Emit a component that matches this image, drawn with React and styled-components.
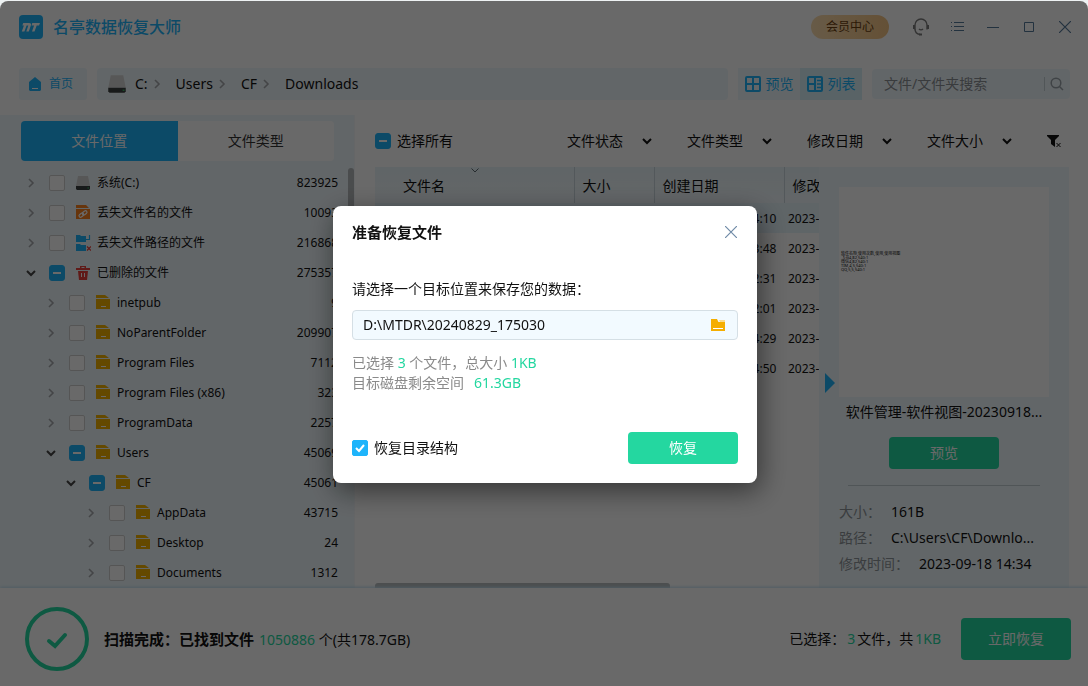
import React, { useEffect, useRef } from "react";
import styled, { createGlobalStyle } from "styled-components";

const blue = "#1eb4fb";
const green = "#24d7a0";
const pale = "#eff8fc";

const GlobalStyle = createGlobalStyle`
  *, *::before, *::after { box-sizing: border-box; }
  body {
    margin: 0;
    background: #eef2f3;
    color: #111;
    font: 14px/20px "Noto Sans", "Noto Sans CJK SC", sans-serif;
  }
  button, input, select { font: inherit; color: inherit; }
  button { padding: 0; border: 0; background: none; cursor: pointer; }
  svg { display: block; flex: none; }
`;

const Window = styled.div`
  display: flex;
  flex-direction: column;
  min-height: calc(100vh - 1px);
  margin-top: 1px;
  background: #fff;
  border-radius: 8px 8px 0 0;
`;

/* ---------- title bar ---------- */
const TitleBar = styled.header`
  display: flex;
  align-items: center;
  height: 52px;
  padding: 0 5px 0 19px;
`;
const Title = styled.h1`
  flex: 1;
  margin: 0 0 0 10px;
  color: ${blue};
  font-size: 16px;
  line-height: 24px;
  font-weight: 500;
`;
const MemberButton = styled.button`
  width: 78px;
  height: 24px;
  margin-right: 14px;
  border-radius: 12px;
  background: linear-gradient(90deg, #fbdcae, #f3c383);
  color: #6b3f10;
  font-size: 12px;
`;
const WindowButton = styled.button`
  display: grid;
  place-items: center;
  width: 36px;
  height: 36px;
  color: #56799a;
`;

/* ---------- toolbar ---------- */
const Toolbar = styled.div`
  display: flex;
  align-items: center;
  gap: 10px;
  height: 32px;
  margin: 15px 18px 15px 19px;
`;
const HomeLink = styled.a`
  display: flex;
  align-items: center;
  gap: 8px;
  width: 68px;
  height: 32px;
  padding-left: 10px;
  border-radius: 3px;
  background: ${pale};
  color: ${blue};
  font-size: 12px;
  text-decoration: none;
`;
const Breadcrumb = styled.nav`
  display: flex;
  flex: 1;
  align-items: center;
  height: 32px;
  padding-left: 10px;
  border-radius: 4px;
  background: ${pale};
`;
const Crumb = styled.a`
  display: flex;
  align-items: center;
  gap: 4px;
  margin-right: 14px;
  color: inherit;
  text-decoration: none;
`;
const DriveMark = styled.span`
  margin-right: 8px;
`;
const ViewSwitch = styled.div`
  display: flex;
  height: 32px;
`;
const ViewButton = styled.button`
  display: flex;
  align-items: center;
  justify-content: center;
  gap: 5px;
  width: 62px;
  background: ${(p) => (p.$active ? "#d8f1f7" : pale)};
  color: ${blue};
`;
const SearchBox = styled.label`
  display: flex;
  align-items: center;
  width: 198px;
  height: 30px;
  padding: 0 6px 0 12px;
  border-radius: 4px;
  background: ${pale};
`;
const SearchInput = styled.input`
  flex: 1;
  min-width: 0;
  padding: 0;
  border: 0;
  background: none;
  outline: none;
  &::placeholder { color: #8a8f94; opacity: 1; }
`;
const SearchMark = styled.span`
  padding-left: 5px;
  border-left: 1px solid #c6d0d6;
`;

/* ---------- layout ---------- */
const Main = styled.main`
  display: flex;
  flex: 1;
`;
const Sidebar = styled.aside`
  display: flex;
  flex: none;
  flex-direction: column;
  width: 355px;
  padding-top: 6px;
  border-right: 1px solid #f4f8fb;
  background: ${pale};
`;
const Content = styled.section`
  display: flex;
  flex: 1;
  flex-direction: column;
  min-width: 0;
  padding: 0 19px 0 20px;
`;

/* ---------- checkbox ---------- */
const CheckShell = styled.span`
  display: grid;
  flex: none;
  width: 16px;
  height: 16px;
  > * { grid-area: 1 / 1; place-self: center; }
  > svg { pointer-events: none; }
`;
const CheckInput = styled.input`
  appearance: none;
  width: 16px;
  height: 16px;
  margin: 0;
  border: 1px solid #cfcfcf;
  border-radius: 2px;
  background: #fff;
  &:checked, &:indeterminate { border-color: ${blue}; background: ${blue}; }
  &:indeterminate { border-radius: 3px; }
`;

function Checkbox({ state, ...rest }) {
  const ref = useRef(null);
  useEffect(() => {
    ref.current.indeterminate = state === "mixed";
  }, [state]);
  return (
    <CheckShell>
      <CheckInput ref={ref} type="checkbox" defaultChecked={state === "checked"} {...rest} />
      {state === "mixed" && (
        <svg width="16" height="16"><path d="M4 8h8" stroke="#fff" strokeWidth="2" /></svg>
      )}
      {state === "checked" && (
        <svg width="16" height="16"><path d="M4 8l3 3 5-6" fill="none" stroke="#fff" strokeWidth="2" /></svg>
      )}
    </CheckShell>
  );
}

/* ---------- sidebar tree ---------- */
const Tabs = styled.div`
  display: flex;
  height: 40px;
  margin: 0 20px 0 21px;
  border-radius: 4px;
  overflow: hidden;
`;
const Tab = styled.button`
  flex: 1;
  background: ${(p) => (p.$active ? blue : "#fff")};
  color: ${(p) => (p.$active ? "#fff" : "#333")};
`;
const TreeArea = styled.div`
  display: flex;
  flex: 1;
  padding-top: 7px;
`;
const Tree = styled.ul`
  flex: 1;
  margin: 0;
  padding: 0 10px 0 25px;
  list-style: none;
`;
const TreeRow = styled.li`
  display: flex;
  align-items: center;
  height: 30px;
  padding-left: ${(p) => p.$level * 20}px;
  font-size: 12px;
`;
const Expander = styled.button`
  display: grid;
  place-items: center;
  width: 12px;
  height: 16px;
  margin-right: 12px;
`;
const NodeLabel = styled.label`
  display: flex;
  flex: 1;
  align-items: center;
`;
const NodeIcon = styled.span`
  width: 16px;
  margin: 0 6px 0 10px;
`;
const ScrollThumb = styled.div`
  width: 6px;
  height: 150px;
  border-radius: 3px;
  background: #b4b8bb;
`;

/* ---------- filters ---------- */
const FilterBar = styled.div`
  display: flex;
  align-items: center;
  gap: 35px;
  height: 52px;
  padding-right: 8px;
`;
const SelectAll = styled.label`
  display: flex;
  align-items: center;
  gap: 6px;
  margin-right: auto;
`;
const FilterField = styled.span`
  display: grid;
  align-items: center;
  width: 85px;
  > * { grid-area: 1 / 1; }
  > svg { justify-self: end; pointer-events: none; }
`;
const FilterSelect = styled.select`
  appearance: none;
  width: 100%;
  padding: 0;
  border: 0;
  background: none;
`;

/* ---------- file table ---------- */
const Columns = styled.div`
  display: flex;
  flex: 1;
`;
const TablePane = styled.div`
  display: flex;
  flex: 1;
  flex-direction: column;
  justify-content: space-between;
  min-width: 0;
  overflow: hidden;
`;
const FileTable = styled.table`
  width: 100%;
  table-layout: fixed;
  border-collapse: collapse;
`;
const HeadCell = styled.th`
  width: ${(p) => p.$width || "auto"};
  height: 36px;
  padding: 2px 0 0 ${(p) => (p.$first ? 28 : 8)}px;
  border-left: ${(p) => (p.$first ? "0" : "1px solid #c9d6dd")};
  background: linear-gradient(#e9f5fa, #f1f8fc);
  font-weight: 400;
  text-align: left;
  white-space: nowrap;
  overflow: hidden;
`;
const HeadInner = styled.span`
  display: flex;
  justify-content: space-between;
  padding-right: 95px;
  > svg { margin-top: -10px; }
`;
const FileRow = styled.tr`
  background: ${(p) => (p.$selected ? "#e6f4fb" : "#fff")};
`;
const Cell = styled.td`
  height: 30px;
  padding: 2px 0 0 ${(p) => (p.$tight ? 4 : 9)}px;
  font-size: 12px;
  white-space: nowrap;
  overflow: hidden;
`;
const HorizontalThumb = styled.div`
  width: 295px;
  height: 5px;
  border-radius: 3px 3px 0 0;
  background: #b9bdbf;
`;

/* ---------- preview ---------- */
const PreviewPane = styled.aside`
  display: flex;
  flex: none;
  width: 250px;
  padding-right: 20px;
  background: ${pale};
`;
const CollapseHandle = styled.button`
  display: flex;
  align-items: center;
  width: 20px;
  padding: 10px 0 0 6px;
`;
const PreviewBody = styled.div`
  display: flex;
  flex: 1;
  flex-direction: column;
  align-items: center;
  min-width: 0;
  padding-top: 20px;
`;
const Thumbnail = styled.pre`
  width: 100%;
  height: 210px;
  margin: 0;
  padding: 65px 2px 0;
  background: #fff;
  font: 4px/4px "Noto Sans", "Noto Sans CJK SC", sans-serif;
`;
const FileName = styled.p`
  margin: 5px 0 15px;
  white-space: nowrap;
`;
const ActionButton = styled.button`
  width: 110px;
  height: ${(p) => (p.$large ? 42 : 32)}px;
  border-radius: 4px;
  background: ${green};
  color: #fff;
`;
const Divider = styled.hr`
  width: 192px;
  margin: 16px 0 13px;
  border: 0;
  border-top: 1px solid #c3ced4;
`;
const Details = styled.dl`
  width: 100%;
  margin: 0;
`;
const DetailRow = styled.div`
  display: flex;
  gap: 10px;
  line-height: 26px;
  white-space: nowrap;
  dt { color: #8d9499; }
  dd { margin: 0; }
`;

/* ---------- footer ---------- */
const Footer = styled.footer`
  position: relative;
  display: flex;
  align-items: center;
  height: 98px;
  padding: 4px 17px 0 25px;
  background: #fff;
  box-shadow: 0 -1px 3px #bfe0f2;
`;
const ScanResult = styled.p`
  flex: 1;
  margin: 0 0 0 15px;
`;
const Strong = styled.strong`
  margin-right: 5px;
  font-size: 15px;
`;
const Accent = styled.span`
  color: ${green};
`;
const Selection = styled.p`
  display: flex;
  gap: 2px;
  margin: 0 20px 0 0;
`;

/* ---------- dialog ---------- */
const Overlay = styled.div`
  position: fixed;
  inset: 1px 0 0 0;
  z-index: 2;
  display: grid;
  place-items: center;
  padding: 2px 0 0 2px;
  border-radius: 8px 8px 0 0;
  background: rgba(0, 0, 0, 0.59);
`;
const Dialog = styled.form`
  width: 424px;
  padding: 16px 19px 19px;
  border-radius: 8px;
  background: #fff;
  box-shadow: 3px 8px 28px rgba(0, 0, 0, 0.5);
`;
const DialogHead = styled.div`
  display: flex;
  align-items: center;
  justify-content: space-between;
  height: 20px;
`;
const DialogTitle = styled.h2`
  margin: 0;
  font-size: 15px;
  line-height: 20px;
`;
const CloseButton = styled.button`
  padding-right: 1px;
  color: #6f8aa6;
`;
const FieldLabel = styled.label`
  display: block;
  margin: 37px 0 11px;
`;
const PathField = styled.div`
  display: flex;
  align-items: center;
  height: 30px;
  padding: 0 12px 0 10px;
  border: 1px solid #d5dfe5;
  border-radius: 4px;
  background: #f2faff;
`;
const PathInput = styled.input`
  flex: 1;
  min-width: 0;
  padding: 0;
  border: 0;
  background: none;
  outline: none;
`;
const Summary = styled.p`
  margin: 13px 0 39px;
  color: #8a8a8a;
`;
const SpaceValue = styled(Accent)`
  margin-left: 10px;
`;
const DialogFoot = styled.div`
  display: flex;
  align-items: center;
  justify-content: space-between;
`;
const Option = styled.label`
  display: flex;
  align-items: center;
  gap: 6px;
`;

/* ---------- icons ---------- */
const Logo = () => (
  <svg width="24" height="24" viewBox="0 0 24 24">
    <rect width="24" height="24" rx="4" fill={blue} />
    <path
      d="M4.200 8H10q2.600 0 1.900 2.200L9.800 16.500H7.300l2-6H7.600l-2.200 6H2.800l2.100-6H3.400zM13.300 8H21l-1 2.500h-2.300L15.500 16.500H13l2.100-6h-2.600z"
      fill="#fff"
    />
  </svg>
);
const Chevron = ({ down, color = "#a5a9ac" }) => (
  <svg width="10" height="10" viewBox="0 0 10 10" fill="none" stroke={color} strokeWidth={down ? 2 : 1.6}>
    <path d={down ? "M1 3l4 4 4-4" : "M3 1l4 4-4 4"} />
  </svg>
);
const Drive = ({ width = 16 }) => (
  <svg width={width} height={width} viewBox="0 0 16 16">
    <path d="M3 1h10l2 10H1z" fill="#d4d4d4" />
    <path d="M1 11h14v3l-1 1H2l-1-1z" fill="#3b3f40" />
    <path d="M12.500 12.500h1.500v1h-1.500z" fill="#3fbf6a" />
  </svg>
);
const Folder = () => (
  <svg width="16" height="16" viewBox="0 0 16 16">
    <path d="M1 0h9l4 3H1z" fill="#f3b200" />
    <path d="M1 4h14v10H1z" fill="#f3b200" />
    <path d="M6 11.500h5" stroke="#fff" />
  </svg>
);
const LinkFolder = () => (
  <svg width="16" height="16" viewBox="0 0 16 16">
    <path d="M1 0h10l3 3H1zM1 4h14v10H1z" fill="#f9801d" />
    <g fill="none" stroke="#fff" strokeWidth="1.200" transform="rotate(-35 8 9)">
      <rect x="3.500" y="7.500" width="5" height="3" rx="1.500" />
      <rect x="7.500" y="7.500" width="5" height="3" rx="1.500" />
    </g>
  </svg>
);
const PathFolders = () => (
  <svg width="16" height="16" viewBox="0 0 16 16">
    <path d="M1 0h4l1 1h5v6H1zM1 9h4l1 1h5v6H1z" fill={blue} />
    <path d="M11 4.500h3.500M14.500 0v5" fill="none" stroke={blue} strokeWidth="1.200" />
    <path d="M12 11.500l4 4M16 11.500l-4 4" stroke="#e9403a" strokeWidth="1.200" />
  </svg>
);
const Trash = () => (
  <svg width="16" height="16" viewBox="0 0 16 16">
    <path d="M1 3h4V1h6v2h4v2H1zM6.500 2v1h3V2z" fill="#e9403a" fillRule="evenodd" />
    <path d="M3 6h10l-1 9H4z" fill="#e9403a" />
    <path d="M6.500 8v4M9.500 8v4" stroke="#fff" />
  </svg>
);
const icons = { drive: Drive, folder: Folder, link: LinkFolder, path: PathFolders, trash: Trash };

const HomeIcon = () => (
  <svg width="12" height="14" viewBox="0 0 12 14">
    <path d="M6 0l6 5v8l-1 1H1l-1-1V5z" fill={blue} />
    <path d="M3 11.500h6" stroke="#fff" />
  </svg>
);
const GridIcon = ({ list }) => (
  <svg width="16" height="16" viewBox="0 0 16 16" fill="none" stroke={blue} strokeWidth="2">
    <rect x="1" y="1" width="14" height="14" rx="1" />
    <path d="M8 1v14" />
    <path d={list ? "M1 8h7" : "M1 8h14"} />
    {list && <path d="M10 4.500h4M10 8h4M10 11.500h4" strokeWidth="1.400" />}
  </svg>
);
const SearchIcon = () => (
  <svg width="14" height="14" viewBox="0 0 14 14" fill="none" stroke="#9aa3aa" strokeWidth="1.500">
    <circle cx="6" cy="6" r="4.800" />
    <path d="M9.500 9.500l3.500 3.500" />
  </svg>
);
const Headset = () => (
  <svg width="18" height="18" viewBox="0 0 18 18" fill="none" stroke="#7d7d7d" strokeWidth="1.400">
    <path d="M3 11.500V7a6 6 0 0 1 12 0v4.500" />
    <path d="M2 7v4M16 7v4" strokeWidth="2" />
    <path d="M3 11c0 3 2 5 5 5.500" />
    <path d="M7 16.500h3" strokeWidth="2" />
    <path d="M7 11c1 1 3 1 4 0" />
  </svg>
);
const ListIcon = () => (
  <svg width="14" height="12" viewBox="0 0 14 12" stroke="currentColor">
    <path d="M4 1.500h10M4 5.500h10M4 9.500h10M1 1.500h1M1 5.500h1M1 9.500h1" />
  </svg>
);
const MinIcon = () => (
  <svg width="12" height="12"><path d="M0 6.500h12" stroke="currentColor" /></svg>
);
const MaxIcon = () => (
  <svg width="12" height="12"><path d="M1.500 1.500h9v9h-9z" fill="none" stroke="currentColor" /></svg>
);
const CloseIcon = () => (
  <svg width="12" height="12" viewBox="0 0 12 12"><path d="M0 0l12 12M12 0L0 12" stroke="currentColor" strokeWidth="1.200" /></svg>
);
const FunnelIcon = () => (
  <svg width="14" height="14" viewBox="0 0 14 14">
    <path d="M0 1h12v1L8 6v7l-4-3V6L0 2z" fill="#111" />
    <path d="M9.500 9l4 4M13.500 9l-4 4" stroke="#111" />
  </svg>
);
const PickFolder = () => (
  <svg width="14" height="12" viewBox="0 0 14 12">
    <path d="M0 0h6l1.500 3H14v9H0z" fill="#f5ae00" />
    <path d="M8 1h6v2H9z" fill="#fbdc8c" />
    <path d="M2 9.500h10" stroke="#fff" />
  </svg>
);
const DoneMark = () => (
  <svg width="64" height="64" viewBox="0 0 64 64" fill="none" stroke={green} strokeWidth="4">
    <circle cx="32" cy="32" r="30" />
    <path d="M24 34l6 5 10-11" strokeLinecap="round" />
  </svg>
);

/* ---------- data ---------- */
const nodes = [
  { level: 0, icon: "drive", name: "系统(C:)", count: "823925" },
  { level: 0, icon: "link", name: "丢失文件名的文件", count: "10093" },
  { level: 0, icon: "path", name: "丢失文件路径的文件", count: "216868" },
  { level: 0, icon: "trash", name: "已删除的文件", count: "275357", open: true },
  { level: 1, icon: "folder", name: "inetpub", count: "9" },
  { level: 1, icon: "folder", name: "NoParentFolder", count: "209907" },
  { level: 1, icon: "folder", name: "Program Files", count: "7112" },
  { level: 1, icon: "folder", name: "Program Files (x86)", count: "323" },
  { level: 1, icon: "folder", name: "ProgramData", count: "2257" },
  { level: 1, icon: "folder", name: "Users", count: "45069", open: true },
  { level: 2, icon: "folder", name: "CF", count: "45061", open: true },
  { level: 3, icon: "folder", name: "AppData", count: "43715" },
  { level: 3, icon: "folder", name: "Desktop", count: "24" },
  { level: 3, icon: "folder", name: "Documents", count: "1312" },
];
const filters = ["文件状态", "文件类型", "修改日期", "文件大小"];
const created = ["14:34:10", "14:33:48", "14:32:31", "14:32:01", "14:34:29", "14:34:50"];
const crumbs = ["C:", "Users", "CF", "Downloads"];
const thumbnailText = `软件名称,使用次数,使用,使用视图
飞书4,82,540:1
微信4,82,540:1
TIM,4,5,540:1
QQ,5,5,540:1`;

export default function App() {
  return (
    <>
      <GlobalStyle />
      <Window>
        <TitleBar>
          <Logo />
          <Title>名亭数据恢复大师</Title>
          <MemberButton>会员中心</MemberButton>
          <WindowButton aria-label="客服"><Headset /></WindowButton>
          <WindowButton aria-label="菜单"><ListIcon /></WindowButton>
          <WindowButton aria-label="最小化"><MinIcon /></WindowButton>
          <WindowButton aria-label="最大化"><MaxIcon /></WindowButton>
          <WindowButton aria-label="关闭"><CloseIcon /></WindowButton>
        </TitleBar>

        <Toolbar>
          <HomeLink href="#home"><HomeIcon />首页</HomeLink>
          <Breadcrumb>
            <DriveMark><Drive width={20} /></DriveMark>
            {crumbs.map((name, i) => (
              <Crumb key={name} href="#path">
                {name}
                {i < crumbs.length - 1 && <Chevron />}
              </Crumb>
            ))}
          </Breadcrumb>
          <ViewSwitch>
            <ViewButton><GridIcon />预览</ViewButton>
            <ViewButton $active><GridIcon list />列表</ViewButton>
          </ViewSwitch>
          <SearchBox>
            <SearchInput placeholder="文件/文件夹搜索" aria-label="文件/文件夹搜索" />
            <SearchMark><SearchIcon /></SearchMark>
          </SearchBox>
        </Toolbar>

        <Main>
          <Sidebar>
            <Tabs>
              <Tab $active>文件位置</Tab>
              <Tab>文件类型</Tab>
            </Tabs>
            <TreeArea>
              <Tree>
                {nodes.map((n) => {
                  const Icon = icons[n.icon];
                  return (
                    <TreeRow key={n.name} $level={n.level}>
                      <Expander aria-label={n.name}>
                        <Chevron down={n.open} color={n.open ? "#444" : undefined} />
                      </Expander>
                      <NodeLabel>
                        <Checkbox state={n.open ? "mixed" : "off"} />
                        <NodeIcon><Icon /></NodeIcon>
                        {n.name}
                      </NodeLabel>
                      <span>{n.count}</span>
                    </TreeRow>
                  );
                })}
              </Tree>
              <ScrollThumb />
            </TreeArea>
          </Sidebar>

          <Content>
            <FilterBar>
              <SelectAll><Checkbox state="mixed" />选择所有</SelectAll>
              {filters.map((name) => (
                <FilterField key={name}>
                  <FilterSelect aria-label={name}><option>{name}</option></FilterSelect>
                  <Chevron down color="#111" />
                </FilterField>
              ))}
              <button aria-label="清除筛选"><FunnelIcon /></button>
            </FilterBar>
            <Columns>
              <TablePane>
                <FileTable>
                  <thead>
                    <tr>
                      <HeadCell $first>
                        <HeadInner>
                          文件名
                          <svg width="8" height="10" viewBox="0 0 8 10" fill="none" stroke="#5f6b73"><path d="M0.500 2.500L4 6l3.500-3.500" /></svg>
                        </HeadInner>
                      </HeadCell>
                      <HeadCell $width="80px">大小</HeadCell>
                      <HeadCell $width="130px">创建日期</HeadCell>
                      <HeadCell $width="35px">修改</HeadCell>
                    </tr>
                  </thead>
                  <tbody>
                    {created.map((time, i) => (
                      <FileRow key={time} $selected={i === 0}>
                        <Cell />
                        <Cell />
                        <Cell>2023-09-18 {time}</Cell>
                        <Cell $tight>2023-</Cell>
                      </FileRow>
                    ))}
                  </tbody>
                </FileTable>
                <HorizontalThumb />
              </TablePane>
              <PreviewPane>
                <CollapseHandle aria-label="收起预览">
                  <svg width="10" height="20"><path d="M0 0l10 10L0 20z" fill={blue} /></svg>
                </CollapseHandle>
                <PreviewBody>
                  <Thumbnail>{thumbnailText}</Thumbnail>
                  <FileName>软件管理-软件视图-20230918...</FileName>
                  <ActionButton>预览</ActionButton>
                  <Divider />
                  <Details>
                    <DetailRow><dt>大小：</dt><dd>161B</dd></DetailRow>
                    <DetailRow><dt>路径：</dt><dd>C:\Users\CF\Downlo...</dd></DetailRow>
                    <DetailRow><dt>修改时间：</dt><dd>2023-09-18 14:34</dd></DetailRow>
                  </Details>
                </PreviewBody>
              </PreviewPane>
            </Columns>
          </Content>
        </Main>

        <Footer>
          <DoneMark />
          <ScanResult>
            <Strong>扫描完成：已找到文件</Strong>
            <Accent>1050886</Accent> 个(共178.7GB)
          </ScanResult>
          <Selection>
            <span>已选择：</span>
            <Accent>3</Accent>
            <span>文件，共</span>
            <Accent>1KB</Accent>
          </Selection>
          <ActionButton $large>立即恢复</ActionButton>
        </Footer>
      </Window>

      <Overlay>
        <Dialog role="dialog" aria-labelledby="dialog-title" onSubmit={(e) => e.preventDefault()}>
          <DialogHead>
            <DialogTitle id="dialog-title">准备恢复文件</DialogTitle>
            <CloseButton type="button" aria-label="关闭"><CloseIcon /></CloseButton>
          </DialogHead>
          <FieldLabel htmlFor="target">请选择一个目标位置来保存您的数据：</FieldLabel>
          <PathField>
            <PathInput id="target" defaultValue={"D:\\MTDR\\20240829_175030"} />
            <button type="button" aria-label="选择文件夹"><PickFolder /></button>
          </PathField>
          <Summary>
            已选择 <Accent>3</Accent> 个文件，总大小 <Accent>1KB</Accent>
            <br />
            目标磁盘剩余空间<SpaceValue>61.3GB</SpaceValue>
          </Summary>
          <DialogFoot>
            <Option><Checkbox state="checked" />恢复目录结构</Option>
            <ActionButton>恢复</ActionButton>
          </DialogFoot>
        </Dialog>
      </Overlay>
    </>
  );
}
